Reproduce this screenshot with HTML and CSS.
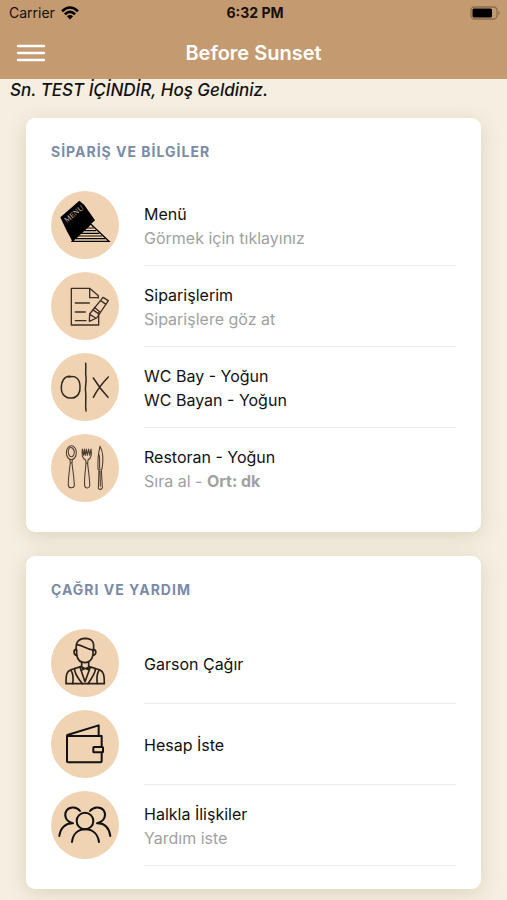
FILE: index.html
```html
<!DOCTYPE html>
<html lang="tr">
<head>
<meta charset="utf-8">
<meta name="viewport" content="width=device-width, initial-scale=1">
<title>Before Sunset</title>
<link rel="stylesheet" href="styles.css">
</head>
<body>
<header class="top">
  <div class="status">
    <div class="status-carrier">
      <span>Carrier</span>
      <svg class="wifi" viewBox="0 0 18 14" aria-hidden="true">
        <g fill="none" stroke="#000" stroke-width="2.6">
          <path d="M1 5.200Q9-2.200 17 5.200"/>
          <path d="M3.900 8.300Q9 3.500 14.100 8.300"/>
        </g>
        <path d="M5.900 10.300Q9 7.700 12.100 10.300L9 13.600Z"/>
      </svg>
    </div>
    <div class="status-time">6:32 PM</div>
    <div class="status-power">
      <svg class="battery" viewBox="0 0 31 14" aria-hidden="true">
        <rect x="1" y="1" width="26" height="12" rx="3.500" fill="none" stroke="#8d6d4c" stroke-width="1.300"/>
        <rect x="2.500" y="2.500" width="19.500" height="9" rx="1.500"/>
        <path d="M28.500 4.800Q31 7 28.500 9.200Z" fill="#8d6d4c"/>
      </svg>
    </div>
  </div>
  <div class="nav">
    <button class="menu-button" type="button" aria-label="Menü">
      <svg viewBox="0 0 30 20" aria-hidden="true"><path d="M2 3H28M2 10H28M2 17H28" stroke="#fff" stroke-width="2.400" stroke-linecap="round"/></svg>
    </button>
    <h1 class="nav-title">Before Sunset</h1>
  </div>
</header>
<main>
  <p class="welcome">Sn. TEST İÇİNDİR, Hoş Geldiniz.</p>

  <section class="card">
    <h2 class="card-title">SİPARİŞ VE BİLGİLER</h2>
    <a class="row" href="#menu">
      <svg class="icon" viewBox="34 20 204 204" aria-hidden="true">
        <path d="M98 171L153 119L208 171Z" fill="#f0d3b3" stroke="#000" stroke-width="4"/>
        <path d="M108 163H197M116 155H188M125 147H179M134 139H170M140 131H162" stroke="#000" stroke-width="3.500"/>
        <path d="M62 99L119 49L134 62L166 108L98 171Q80 140 62 99Z"/>
        <text class="menu-mark" transform="translate(81 116) rotate(-39)">MENU</text>
      </svg>
      <div class="row-text"><span>Menü</span><span class="muted">Görmek için tıklayınız</span></div>
    </a>
    <a class="row" href="#siparisler">
      <svg class="icon line" viewBox="34 20 204 204" aria-hidden="true">
        <g stroke="#3d2f26" stroke-width="4">
          <path d="M176 98V91L150 69H95V179H177V142M150 69V97H176"/>
          <path d="M107 113H149M107 140H137M107 166H139"/>
          <path d="M190 96L206 106L171 158L149 168L150 146ZM183 106L199 117M159 133L176 145M164 126L180 139M150 147L168 158"/>
        </g>
      </svg>
      <div class="row-text"><span>Siparişlerim</span><span class="muted">Siparişlere göz at</span></div>
    </a>
    <a class="row" href="#wc">
      <svg class="icon line" viewBox="34 20 204 204" aria-hidden="true">
        <g stroke="#30271f" stroke-width="4.500">
          <path d="M91 90C74 89 64 105 65 127C66 147 81 157 98 155C114 153 123 139 121 119C120 98 109 87 88 92"/>
          <path d="M138 51C140 65 136 78 139 94C141 108 135 121 138 138C140 157 136 174 139 194"/>
          <path d="M161 95C171 111 187 134 205 153M206 92C190 108 173 130 161 153"/>
        </g>
      </svg>
      <div class="row-text"><span>WC Bay - Yoğun</span><span>WC Bayan - Yoğun</span></div>
    </a>
    <a class="row" href="#restoran">
      <svg class="icon line" viewBox="34 20 204 204" aria-hidden="true">
        <g stroke="#4c3d31" stroke-width="3.200">
          <ellipse cx="95" cy="76" rx="15" ry="21"/>
          <path d="M86 75C84 62 92 58 98 62C108 70 104 85 97 88C91 90 87 84 86 75"/>
          <path d="M91 97L92 107C89 132 85 157 86 174C87 184 104 184 104 174C104 155 99 128 97 107L98 97M92 107H97"/>
          <path d="M128 65C126 84 127 92 138 98L139 108C137 132 133 158 135 176C137 184 149 184 150 176C151 159 146 132 144 108L145 98C157 91 157 80 154 65L150 84L147 65L143 84L140 65L137 84L134 65L132 84L128 65M139 108H144"/>
          <path d="M181 57C175 79 174 101 175 126L187 125C191 101 192 76 181 57M178 81C181 91 179 108 180 122M178 126L176 183C180 188 187 187 188 181L185 126M181 131L182 177"/>
        </g>
      </svg>
      <div class="row-text"><span>Restoran - Yoğun</span><span class="muted">Sıra al - <b>Ort: dk</b></span></div>
    </a>
  </section>

  <section class="card">
    <h2 class="card-title">ÇAĞRI VE YARDIM</h2>
    <a class="row" href="#garson">
      <svg class="icon line" viewBox="34 20 204 204" aria-hidden="true">
        <g stroke="#2b211b" stroke-width="5">
          <path d="M110 85C107 62 114 49 137 48C159 48 165 62 161 85"/>
          <path d="M112 68C124 66 132 76 159 83"/>
          <path d="M110 81C100 82 101 98 112 99M161 81C172 83 170 98 160 99"/>
          <path d="M111 83V98C114 113 124 121 136 121C149 121 157 111 160 98V83"/>
          <path d="M126 120V135M147 120V135M123 133L92 143C81 148 79 156 79 184H194C194 156 191 148 181 143L149 133"/>
          <path d="M105 139C103 150 114 167 128 184M167 139C169 150 157 167 145 184M121 135L136 178L152 135M94 144Q103 158 99 184M178 144Q169 158 173 184"/>
        </g>
        <path d="M126 132L137 136L149 132V146L137 141L126 146Z" fill="#2b211b"/>
      </svg>
      <div class="row-text"><span>Garson Çağır</span></div>
    </a>
    <a class="row" href="#hesap">
      <svg class="icon line" viewBox="34 20 204 204" aria-hidden="true">
        <g stroke="#111" stroke-width="6">
          <path d="M186 130V98H82V172Q82 177 87 177H181Q186 177 186 172V148"/>
          <path d="M83 95L177 66V96"/>
          <rect x="161" y="131" width="29" height="16" rx="2"/>
        </g>
      </svg>
      <div class="row-text"><span>Hesap İste</span></div>
    </a>
    <a class="row" href="#iliskiler">
      <svg class="icon line" viewBox="34 20 204 204" aria-hidden="true">
        <g stroke="#111" stroke-width="6">
          <circle cx="136" cy="110" r="25"/>
          <path d="M97 173C100 148 116 135 137 135C158 135 174 148 178 173"/>
          <path d="M121 80C112 67 91 65 81 78C72 92 77 112 100 117C78 116 62 130 59 155"/>
          <path d="M151 80C161 67 182 65 192 78C201 92 195 112 172 117C194 116 208 130 212 155"/>
        </g>
      </svg>
      <div class="row-text"><span>Halkla İlişkiler</span><span class="muted">Yardım iste</span></div>
    </a>
  </section>
</main>
</body>
</html>
```
FILE: styles.css
```css
* {
  box-sizing: border-box;
}

body {
  margin: 0;
  background: #f6eee1;
  color: #111;
  font-family: Inter, "Liberation Sans", sans-serif;
  font-size: 16px;
  line-height: 24px;
}

.top {
  background: #c49a71;
}

.status {
  display: grid;
  grid-template-columns: 1fr auto 1fr;
  align-items: center;
  height: 26px;
  padding: 0 6px 0 9px;
  color: #14100c;
  font-size: 14px;
}

.status-carrier {
  display: flex;
  align-items: center;
  gap: 6px;
}

.wifi {
  width: 18px;
  height: 14px;
}

.status-time {
  font-weight: 700;
}

.status-power {
  display: flex;
  justify-content: flex-end;
}

.battery {
  width: 31px;
  height: 14px;
}

.nav {
  display: grid;
  grid-template-columns: 30px 1fr 30px;
  align-items: center;
  height: 53px;
  padding: 0 16px;
}

.menu-button {
  display: flex;
  width: 30px;
  padding: 0;
  border: 0;
  background: none;
}

.menu-button svg {
  width: 30px;
  height: 20px;
}

.nav-title {
  margin: 0;
  color: #fff;
  font-size: 20px;
  font-weight: 600;
  text-align: center;
}

.welcome {
  margin: 0;
  padding: 0 10px;
  font-size: 17px;
  font-style: italic;
  font-weight: 500;
  line-height: 22px;
}

.card {
  margin: 17px 26px 24px;
  padding: 22px 25px 23px;
  border-radius: 9px;
  background: #fff;
  box-shadow: 0 4px 20px rgba(110, 110, 50, 0.2);
}

.card-title {
  margin: 0 0 21px;
  color: #7b8ba8;
  font-size: 14px;
  font-weight: 700;
  letter-spacing: 1px;
}

.row {
  display: flex;
  gap: 25px;
  color: inherit;
  text-decoration: none;
}

.icon {
  flex: none;
  width: 68px;
  height: 68px;
  margin: 6px 0 7px;
  border-radius: 50%;
  background: #f0d3b3;
}

.line {
  fill: none;
  stroke-linecap: round;
  stroke-linejoin: round;
}

.menu-mark {
  fill: #d8c4ab;
  font-family: "Liberation Serif", serif;
  font-size: 23px;
}

.row-text {
  display: flex;
  flex: 1;
  flex-direction: column;
  justify-content: center;
  padding-top: 2px;
  border-bottom: 1px solid #ececec;
}

.card:first-of-type .row:last-child .row-text {
  border-bottom-color: transparent;
}

.muted {
  color: #a1a1a1;
}
```
